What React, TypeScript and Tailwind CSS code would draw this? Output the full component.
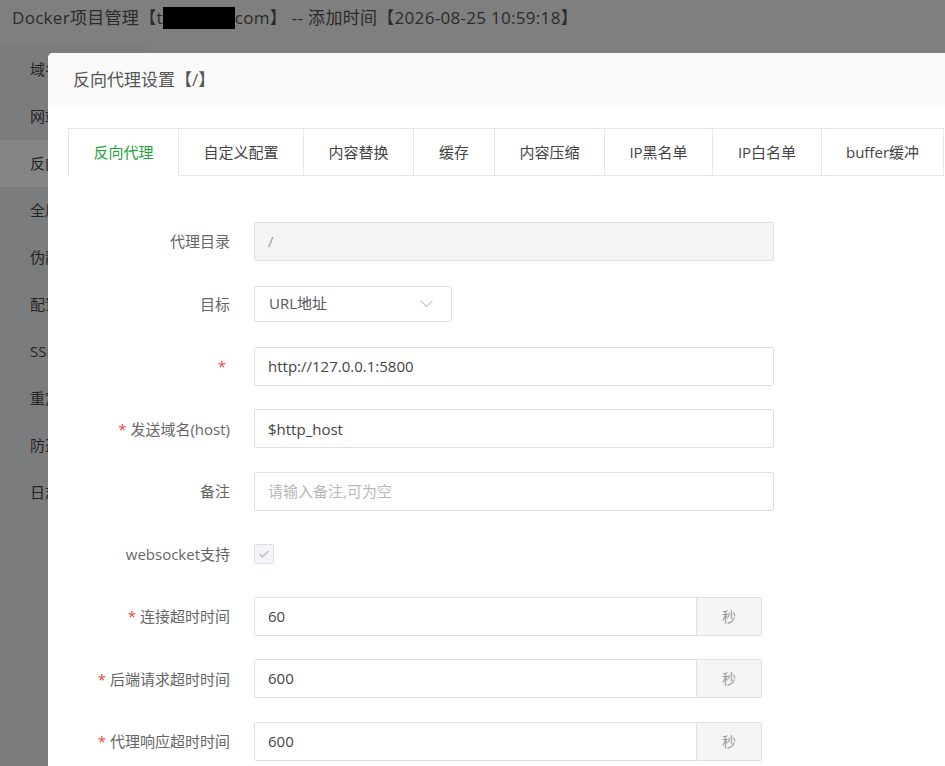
import React from 'react';

const sideItems = ['域名管理', '网站目录', '反向代理', '全局配置', '伪静态', '配置文件', 'SSL', '重定向', '防盗链', '日志'];

const tabs = [
  { name: '反向代理', w: 'w-[110px]' },
  { name: '自定义配置', w: 'w-[125px]' },
  { name: '内容替换', w: 'w-[110px]' },
  { name: '缓存', w: 'w-[81px]' },
  { name: '内容压缩', w: 'w-[110px]' },
  { name: 'IP黑名单', w: 'w-[108px]' },
  { name: 'IP白名单', w: 'w-[109px]' },
  { name: 'buffer缓冲', w: 'w-[123px]' },
];

function Label({ text, required }: { text: string; required?: boolean }) {
  return (
    <div className="w-[162px] shrink-0 text-right text-[15px] leading-[20px] text-[#666] mr-[24px] whitespace-nowrap">
      {required && <span className="text-[#ef4444] mr-[4px]">*</span>}
      {text}
    </div>
  );
}

function TextInput({ value, placeholder, disabled }: { value?: string; placeholder?: string; disabled?: boolean }) {
  return (
    <input
      readOnly
      defaultValue={value}
      placeholder={placeholder}
      className={`w-[520px] h-[39px] px-[13px] rounded-[2px] border border-[#dddfe8] text-[15px] outline-none placeholder:text-[#b8b8b8] ${
        disabled ? 'bg-[#f5f5f6] text-[#9a9a9a]' : 'bg-white text-[#444]'
      }`}
    />
  );
}

function SecondsInput({ value }: { value: string }) {
  return (
    <div className="flex w-[508px] h-[39px]">
      <input
        readOnly
        defaultValue={value}
        className="flex-1 min-w-0 px-[13px] rounded-l-[2px] border border-[#dddfe8] bg-white text-[15px] text-[#444] outline-none"
      />
      <div className="w-[65px] flex items-center justify-center border border-l-0 border-[#dddfe8] rounded-r-[2px] bg-[#f5f5f6] text-[14px] text-[#999]">
        秒
      </div>
    </div>
  );
}

export default function App() {
  return (
    <div className="relative w-[945px] h-[766px] overflow-hidden bg-[#7f7f7f] font-['Open_Sans','Noto_Sans_CJK_SC',sans-serif]">
      {/* page behind the mask */}
      <div className="h-[46px] pl-[12px] pt-[7px] text-[17px] tracking-[0.3px] leading-[22px] text-[#2b2b2b] whitespace-nowrap">
        Docker项目管理【t
        <span className="inline-block w-[72px] h-[22px] bg-black align-[-5px]" />
        com】 -- 添加时间【2026-08-25 10:59:18】
      </div>
      <div className="flex">
        <div className="w-[146px] h-[720px] bg-[#7b7c7e]">
          {sideItems.map((item, i) => (
            <div
              key={item}
              className={`h-[47px] pl-[30px] flex items-center text-[15px] text-[#242424] ${i === 2 ? 'bg-[#858586]' : ''}`}
            >
              {item}
            </div>
          ))}
        </div>
      </div>

      {/* dialog */}
      <div className="absolute left-[48px] top-[53px] w-[960px] h-[760px] bg-white rounded-[5px] overflow-hidden">
        <div className="h-[54px] bg-[#fafafa] pl-[25px] flex items-center text-[17px] text-[#555]">反向代理设置【/】</div>

        <div className="pt-[21px] px-[20px]">
          <div className="flex h-[48px]">
            {tabs.map((t, i) => (
              <div
                key={t.name}
                className={`${t.w} shrink-0 flex items-center justify-center text-[15px] border-t border-l border-[#e4e5ee] ${
                  i === 0 ? 'text-[#20a53a]' : 'text-[#444] border-b'
                } ${i === tabs.length - 1 ? 'border-r' : ''}`}
              >
                {t.name}
              </div>
            ))}
          </div>

          <div className="mt-[45px] flex flex-col gap-[22.5px]">
            <div className="flex items-center h-[40px]">
              <Label text="代理目录" />
              <TextInput value="/" disabled />
            </div>
            <div className="flex items-center h-[40px]">
              <Label text="目标" />
              <div className="w-[198px] h-[36px] px-[14px] flex items-center justify-between border border-[#dddfe8] rounded-[2px] text-[15px] text-[#555]">
                <span>URL地址</span>
                <svg width="13" height="8" viewBox="0 0 13 8" fill="none" className="mr-[4px]">
                  <polyline points="0.5,0.8 6.5,6.5 12.5,0.8" stroke="#c0c4cc" strokeWidth="1.1" />
                </svg>
              </div>
            </div>
            <div className="flex items-center h-[40px]">
              <Label text="" required />
              <TextInput value="http://127.0.0.1:5800" />
            </div>
            <div className="flex items-center h-[40px]">
              <Label text="发送域名(host)" required />
              <TextInput value="$http_host" />
            </div>
            <div className="flex items-center h-[40px]">
              <Label text="备注" />
              <TextInput placeholder="请输入备注,可为空" />
            </div>
            <div className="flex items-center h-[40px]">
              <Label text="websocket支持" />
              <div className="w-[20px] h-[20px] rounded-[2px] border border-[#dcdfe6] bg-[#f2f4f8] flex items-center justify-center">
                <svg width="12" height="10" viewBox="0 0 12 10" fill="none">
                  <polyline points="1.5,5 4.5,8 10.5,2" stroke="#b5b9c2" strokeWidth="1.2" />
                </svg>
              </div>
            </div>
            <div className="flex items-center h-[40px]">
              <Label text="连接超时时间" required />
              <SecondsInput value="60" />
            </div>
            <div className="flex items-center h-[40px]">
              <Label text="后端请求超时时间" required />
              <SecondsInput value="600" />
            </div>
            <div className="flex items-center h-[40px]">
              <Label text="代理响应超时时间" required />
              <SecondsInput value="600" />
            </div>
          </div>
        </div>
      </div>
    </div>
  );
}
